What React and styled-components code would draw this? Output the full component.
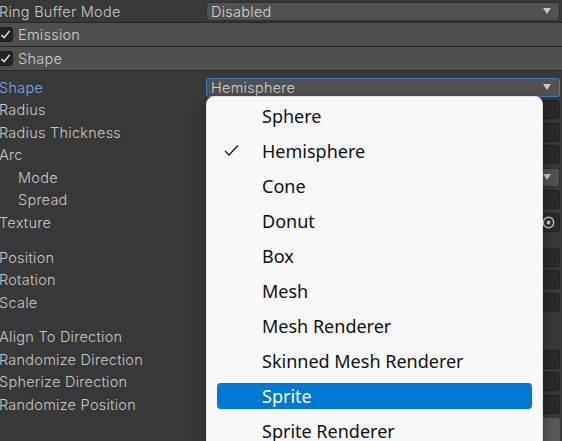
import React from 'react';
import styled, { createGlobalStyle } from 'styled-components';

const GlobalStyle = createGlobalStyle`
  html, body {
    margin: 0;
    height: 100%;
    overflow: hidden;
    background: #383838;
  }
  body {
    font-family: Inter, "Noto Sans", sans-serif;
  }
`;

const shapes = [
  'Sphere',
  'Hemisphere',
  'Cone',
  'Donut',
  'Box',
  'Mesh',
  'Mesh Renderer',
  'Skinned Mesh Renderer',
  'Sprite',
  'Sprite Renderer',
  'Circle',
  'Edge',
  'Rectangle'
];

const Page = styled.div`
  position: relative;
  width: 562px;
  height: 441px;
  overflow: hidden;
`;

const Inspector = styled.div`
  display: flex;
  flex-direction: column;
  margin-left: -2px;
  width: 565px;
`;

const Row = styled.div`
  display: flex;
  align-items: center;
  height: ${p => p.h || 22.5}px;
`;

const Label = styled.div`
  width: 208px;
  flex: none;
  padding-left: ${p => (p.indent ? 20 : 1)}px;
  box-sizing: border-box;
  font-size: 14.5px;
  font-weight: 300;
  letter-spacing: 0.25px;
  color: ${p => (p.focused ? '#7ba9ef' : '#c8c8c8')};
  white-space: nowrap;
`;

const Control = styled.div`
  flex: 1;
  display: flex;
  align-items: center;
  margin-right: 3px;
  height: 19px;
`;

const Dropdown = styled.div`
  flex: 1;
  height: 100%;
  box-sizing: border-box;
  display: flex;
  align-items: center;
  justify-content: space-between;
  padding: 0 8px 0 4px;
  background: #515151;
  border: 1px solid ${p => (p.focused ? '#3c7ac2' : '#2e2e2e')};
  border-radius: 3px;
  font-size: 14.5px;
  font-weight: 300;
  letter-spacing: 0.25px;
  color: #d4d4d4;
`;

const Arrow = styled.span`
  width: 0;
  height: 0;
  border-left: 4.5px solid transparent;
  border-right: 4.5px solid transparent;
  border-top: 6px solid #c8c8c8;
`;

const Field = styled.div`
  flex: 1;
  height: 100%;
  box-sizing: border-box;
  background: #2a2a2a;
  border: 1px solid #212121;
  border-radius: 3px;
  display: flex;
  align-items: center;
  justify-content: flex-end;
  padding-right: 4px;
`;

const VectorGroup = styled.div`
  flex: 1;
  display: flex;
  gap: 6px;
  height: 100%;
`;

const Axis = styled.span`
  font-size: 14.5px;
  font-weight: 300;
  color: #c8c8c8;
  align-self: center;
  padding-right: 2px;
`;

const Toggle = styled.div`
  width: 15px;
  height: 15px;
  flex: none;
  box-sizing: border-box;
  background: #232323;
  border: 1px solid #1c1c1c;
  border-radius: 3px;
  display: flex;
  align-items: center;
  justify-content: center;
`;

const Header = styled.div`
  display: flex;
  align-items: center;
  gap: 5px;
  height: 23px;
  background: #4f4f4f;
  border-bottom: 1px solid #262626;
  font-size: 14.5px;
  font-weight: 300;
  letter-spacing: 0.25px;
  color: #d0d0d0;
`;

const TopRule = styled.div`
  height: 1px;
  background: #262626;
`;

const Spacer = styled.div`
  height: ${p => p.h}px;
  flex: none;
`;

const ToolButton = styled.div`
  margin: 2px 3px 0 208px;
  height: 25px;
  background: #585858;
  border-radius: 3px;
`;

const Menu = styled.div`
  position: absolute;
  left: 206px;
  top: 96px;
  width: 337px;
  box-sizing: border-box;
  padding: 1px 0;
  background: #f9f9f9;
  border: 1px solid #e2e2e2;
  border-radius: 8px;
  box-shadow: 0 4px 14px rgba(0, 0, 0, 0.35);
  font-family: "Noto Sans", "Open Sans", sans-serif;
`;

const Item = styled.div`
  position: relative;
  height: 35px;
  display: flex;
  align-items: center;
  padding-left: 55px;
  font-size: 18px;
  color: ${p => (p.active ? '#ffffff' : '#111111')};

  &::before {
    content: '';
    position: absolute;
    left: 10px;
    right: 10px;
    top: 5px;
    bottom: 4px;
    border-radius: 4px;
    background: ${p => (p.active ? '#0078d4' : 'transparent')};
  }

  span {
    position: relative;
  }
`;

const Check = styled.svg`
  position: absolute;
  left: 17px;
  top: 11px;
`;

const Tick = ({ size = 11, color = '#e8e8e8' }) => (
  <svg width={size} height={size} viewBox="0 0 12 12">
    <polyline points="1.5,6.5 4.5,9.5 10.5,2" fill="none" stroke={color} strokeWidth="1.6" />
  </svg>
);

const ObjectPicker = () => (
  <svg width="13" height="13" viewBox="0 0 13 13">
    <circle cx="6.5" cy="6.5" r="5.2" fill="none" stroke="#c4c4c4" strokeWidth="1.4" />
    <circle cx="6.5" cy="6.5" r="2" fill="#c4c4c4" />
  </svg>
);

const PropRow = ({ label, indent, focused, children }) => (
  <Row>
    <Label indent={indent} focused={focused}>
      {label}
    </Label>
    <Control>{children}</Control>
  </Row>
);

const Vector3 = () => (
  <VectorGroup>
    {['X', 'Y', 'Z'].map(a => (
      <React.Fragment key={a}>
        <Axis>{a}</Axis>
        <Field />
      </React.Fragment>
    ))}
  </VectorGroup>
);

const App = () => {
  const selected = 'Hemisphere';
  const hovered = 'Sprite';

  return (
    <Page>
      <GlobalStyle />
      <Inspector>
        <Row h={22}>
          <Label>Ring Buffer Mode</Label>
          <Control>
            <Dropdown>
              Disabled
              <Arrow />
            </Dropdown>
          </Control>
        </Row>
        <TopRule />
        <Header>
          <Toggle>
            <Tick />
          </Toggle>
          Emission
        </Header>
        <Header>
          <Toggle>
            <Tick />
          </Toggle>
          Shape
        </Header>
        <Spacer h={5} />
        <PropRow label="Shape" focused>
          <Dropdown focused>
            Hemisphere
            <Arrow />
          </Dropdown>
        </PropRow>
        <PropRow label="Radius">
          <Field />
        </PropRow>
        <PropRow label="Radius Thickness">
          <Field />
        </PropRow>
        <PropRow label="Arc">
          <Field />
        </PropRow>
        <PropRow label="Mode" indent>
          <Dropdown>
            Random
            <Arrow />
          </Dropdown>
        </PropRow>
        <PropRow label="Spread" indent>
          <Field />
        </PropRow>
        <PropRow label="Texture">
          <Field>
            <ObjectPicker />
          </Field>
        </PropRow>
        <Spacer h={12.5} />
        <PropRow label="Position">
          <Vector3 />
        </PropRow>
        <PropRow label="Rotation">
          <Vector3 />
        </PropRow>
        <PropRow label="Scale">
          <Vector3 />
        </PropRow>
        <Spacer h={12} />
        <PropRow label="Align To Direction">
          <Toggle />
        </PropRow>
        <PropRow label="Randomize Direction">
          <Field />
        </PropRow>
        <PropRow label="Spherize Direction">
          <Field />
        </PropRow>
        <PropRow label="Randomize Position">
          <Field />
        </PropRow>
        <ToolButton />
      </Inspector>

      <Menu>
        {shapes.map(s => (
          <Item key={s} active={s === hovered}>
            {s === selected && (
              <Check width="15" height="13" viewBox="0 0 15 13">
                <polyline points="1,7 5,11 14,1.5" fill="none" stroke="#1a1a1a" strokeWidth="1.3" />
              </Check>
            )}
            <span>{s}</span>
          </Item>
        ))}
      </Menu>
    </Page>
  );
};

export default App;
